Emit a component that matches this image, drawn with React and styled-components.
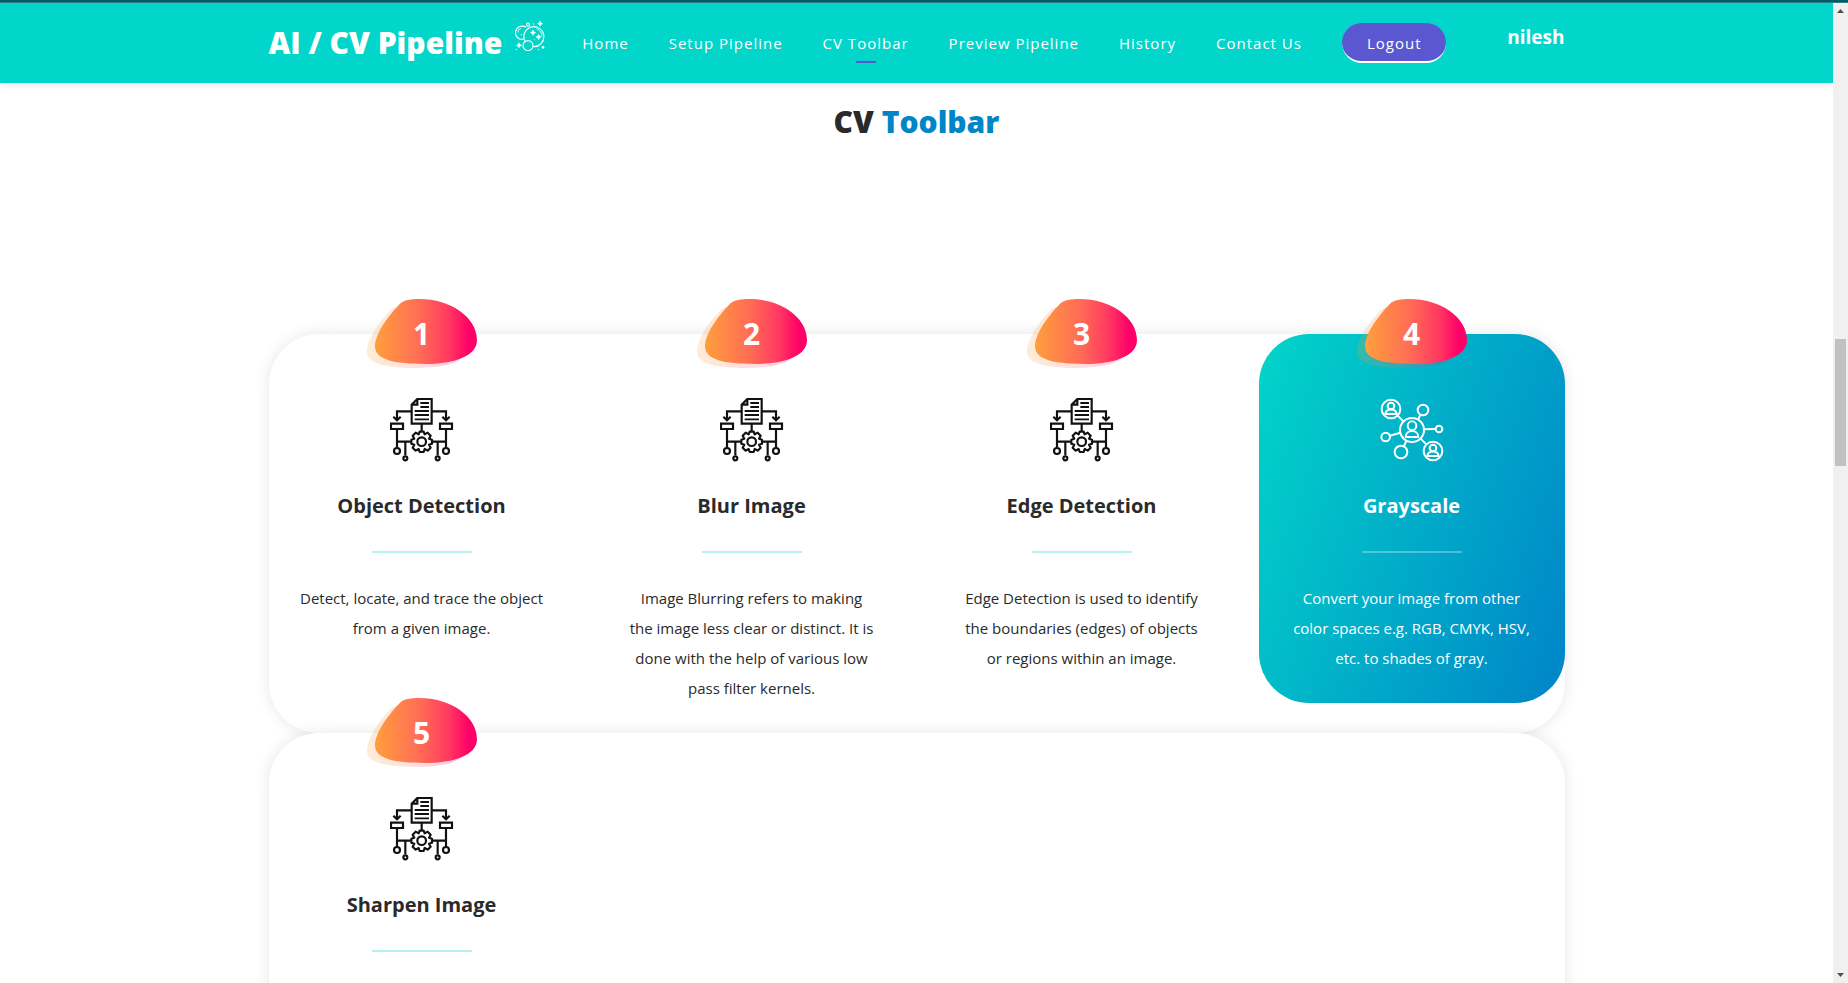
import React from "react";
import styled, { createGlobalStyle } from "styled-components";

const GlobalStyle = createGlobalStyle`
  *, *::before, *::after { box-sizing: border-box; }
  body {
    margin: 0;
    background: #fff;
    color: #2a2a2a;
    font-family: "Open Sans", "Noto Sans", sans-serif;
  }
  h1, h2, h3, p, ul { margin: 0; padding: 0; }
`;

const Shell = styled.div`
  display: flex;
  flex-direction: column;
  height: 100vh;
  overflow: hidden;
`;

const TopStrip = styled.div`
  flex: none;
  height: 3px;
  background: #005b66;
  border-bottom: 1px solid #2b7f85;
`;

const Viewport = styled.div`
  flex: 1;
  min-height: 0;
  display: flex;
`;

const Page = styled.div`
  flex: 1;
  min-width: 0;
  overflow: hidden;
`;

const Container = styled.div`
  width: 100%;
  max-width: 1320px;
  margin: 0 auto;
  padding: 0 12px;
`;

const Header = styled.header`
  position: relative;
  background: #02d5c9;
  box-shadow: 0 0 10px rgba(0, 0, 0, 0.15);
`;

const HeaderRow = styled(Container)`
  display: flex;
  align-items: center;
  height: 80px;
`;

const Brand = styled.a`
  display: flex;
  align-items: flex-start;
  gap: 13px;
  color: #fff;
  font-size: 30px;
  font-weight: 800;
  line-height: 44px;
  text-decoration: none;
  white-space: nowrap;
`;

const NavList = styled.ul`
  display: flex;
  gap: 40px;
  margin-left: 37px;
  list-style: none;
`;

const NavLink = styled.a`
  display: block;
  position: relative;
  height: 40px;
  color: #fff;
  font-size: 15px;
  letter-spacing: 1px;
  line-height: 40px;
  text-decoration: none;
  white-space: nowrap;

  &::after {
    content: "";
    display: ${(p) => (p.$active ? "block" : "none")};
    position: absolute;
    left: 50%;
    bottom: 0;
    width: 20px;
    height: 2px;
    margin-left: -10px;
    background: #5a57d0;
  }
`;

const LogoutButton = styled.button`
  display: block;
  height: 40px;
  padding: 2px 25px 0;
  border: 0;
  border-bottom: 2px solid #fff;
  border-radius: 20px;
  background: #5a57d0;
  color: #fff;
  font: inherit;
  font-size: 15px;
  letter-spacing: 1px;
  line-height: 36px;
`;

const UserName = styled.span`
  align-self: flex-start;
  margin: 20px 0 0 auto;
  color: #fff;
  font-size: 19px;
  font-weight: 700;
  line-height: 28px;
`;

const PageTitle = styled.h2`
  padding: 18px 0 192px;
  font-size: 30px;
  font-weight: 800;
  line-height: 41px;
  text-align: center;

  em {
    color: #0086c8;
    font-style: normal;
  }
`;

const Panel = styled.section`
  display: grid;
  grid-template-columns: repeat(4, minmax(0, 1fr));
  gap: 24px;
  align-items: start;
  min-height: 360px;
  border-radius: 50px;
  background: #fff;
  box-shadow: 0 0 15px rgba(0, 0, 0, 0.1);
`;

const Card = styled.article`
  position: relative;
  display: flex;
  flex-direction: column;
  align-items: center;
  padding: 64px 30px 30px;
  border-radius: 50px;
  text-align: center;
  color: ${(p) => (p.$featured ? "#fff" : "inherit")};
  background: ${(p) =>
    p.$featured ? "linear-gradient(110deg, #02d5c9 0%, #0084c8 100%)" : "none"};
`;

const Badge = styled.div`
  position: absolute;
  top: -35px;
  left: 50%;
  width: 110px;
  height: 70px;
  margin-left: -55px;
  color: #fff;
  font-size: 30px;
  font-weight: 700;
  line-height: 70px;

  svg {
    position: absolute;
    inset: 0;
  }

  span {
    position: relative;
  }
`;

const CardTitle = styled.h3`
  margin-top: 30px;
  font-size: 20px;
  font-weight: 700;
  line-height: 28px;
`;

const Divider = styled.div`
  width: 100px;
  height: 2px;
  margin: 31px 0 30px;
  background: ${(p) => (p.$featured ? "#fff" : "#02d5c9")};
  opacity: 0.3;
`;

const CardText = styled.p`
  font-size: 15px;
  line-height: 30px;
`;

const ScrollTrack = styled.div`
  flex: none;
  display: flex;
  flex-direction: column;
  align-items: center;
  width: 15px;
  padding: 6px 0;
  background: #f0f0f0;
`;

const ScrollThumb = styled.div`
  flex: none;
  width: 11px;
  height: 127px;
  margin: 326px 0 auto;
  background: #c1c1c1;
`;

const Sparkle = ({ x, y, r }) => (
  <path
    d={`M${x} ${y - r}Q${x + 1} ${y - 1} ${x + r} ${y}Q${x + 1} ${y + 1} ${x} ${y + r}Q${x - 1} ${y + 1} ${x - r} ${y}Q${x - 1} ${y - 1} ${x} ${y - r}Z`}
    fill="currentColor"
    strokeWidth="1.5"
  />
);

const BubblesIcon = () => (
  <svg width="30" height="30" viewBox="30 33 90 90" fill="none" stroke="currentColor" strokeWidth="3.5" aria-hidden="true">
    <circle cx="69" cy="44" r="4.5" />
    <path d="M63 52A20 20 0 1 0 55 88M60 94A30 30 0 1 1 84 110" />
    <circle cx="69" cy="107" r="15" />
    <path d="M38 68Q38 57 49 55M94 56Q110 62 111 79" strokeWidth="2.5" />
    <Sparkle x={105} y={41} r={8} />
    <Sparkle x={84} y={68} r={8} />
    <Sparkle x={101} y={81} r={8} />
    <Sparkle x={42} y={106} r={8} />
    <g fill="currentColor" stroke="none">
      <circle cx="49" cy="74" r="2" />
      <circle cx="114" cy="112" r="4" />
      <circle cx="34" cy="118" r="2" />
      <circle cx="101" cy="118" r="2" />
      <circle cx="86" cy="42" r="2" />
      <circle cx="88" cy="89" r="1.5" />
    </g>
  </svg>
);

const WorkflowIcon = () => (
  <svg width="64" height="64" viewBox="30 24 192 192" fill="none" stroke="#111" strokeWidth="6.5" aria-hidden="true">
    <path d="M112 27H155V101H95V44ZM112 27V44H95" />
    <path d="M121 39H147M121 51H147M104 63H147M104 75H147M104 88H147" strokeWidth="5.5" />
    <path d="M95 64H51V90M155 64H198V90M40 80L51 91L62 80M187 80L198 91L209 80" />
    <path d="M33 101H69V117H33ZM180 101H216V117H180Z" />
    <path d="M125 101V124M51 117V173M198 117V173M51 155H92M158 155H198M76 155V196M173 155V196" />
    <circle cx="51" cy="183" r="9" />
    <circle cx="198" cy="183" r="9" />
    <circle cx="76" cy="205" r="6" />
    <circle cx="173" cy="205" r="6" />
    <path
      d="M119 125H131L134 133L143 128L152 137L147 146L156 149V161L147 164L152 173L143 182L134 177L131 186H119L116 177L107 182L98 173L103 164L94 161V149L103 146L98 137L107 128L116 133Z"
      strokeLinejoin="round"
    />
    <circle cx="125" cy="155" r="13" />
  </svg>
);

const NetworkIcon = () => (
  <svg width="64" height="64" viewBox="30 24 192 192" fill="none" stroke="#fff" strokeWidth="6" aria-hidden="true">
    <circle cx="126" cy="120" r="36" />
    <circle cx="63" cy="57" r="28" />
    <circle cx="189" cy="183" r="28" />
    <circle cx="159" cy="60" r="16" />
    <circle cx="93" cy="186" r="19" />
    <circle cx="47" cy="141" r="13" />
    <circle cx="207" cy="117" r="10" />
    <path d="M83 77L100 94M152 146L169 163M151 75L144 89M109 153L102 168M162 118L197 117M91 128L60 137" />
    <circle cx="126" cy="107" r="13" />
    <path d="M107 141C107 117 145 117 145 141Z" strokeLinejoin="round" />
    <circle cx="63" cy="48" r="10" />
    <path d="M46 72C47 54 79 54 80 72Z" strokeLinejoin="round" />
    <circle cx="189" cy="174" r="10" />
    <path d="M172 198C173 180 205 180 206 198Z" strokeLinejoin="round" />
  </svg>
);

const BadgeShape = ({ id }) => (
  <svg width="110" height="70" viewBox="51 42 330 210" aria-hidden="true">
    <defs>
      <linearGradient id={id}>
        <stop offset="0" stopColor="#ff9f3c" />
        <stop offset="0.45" stopColor="#ff6b56" />
        <stop offset="0.73" stopColor="#ff3762" />
        <stop offset="0.92" stopColor="#ff0068" />
      </linearGradient>
    </defs>
    <path
      d="M51 200C51 160 90 108 125 72C140 62 165 62 190 62L335 220C312 240 262 249 195 249C110 247 51 238 51 200Z"
      fill={`url(#${id})`}
      opacity="0.2"
    />
    <path
      d="M75 184C75 148 110 98 150 56C160 45 185 42 208 42C302 42 381 97 381 165C381 214 312 237 224 237C134 237 75 225 75 184Z"
      fill={`url(#${id})`}
    />
  </svg>
);

const navItems = ["Home", "Setup Pipeline", "CV Toolbar", "Preview Pipeline", "History", "Contact Us"];

const rows = [
  [
    { n: 1, title: "Object Detection", text: "Detect, locate, and trace the object from a given image." },
    {
      n: 2,
      title: "Blur Image",
      text: "Image Blurring refers to making the image less clear or distinct. It is done with the help of various low pass filter kernels.",
    },
    {
      n: 3,
      title: "Edge Detection",
      text: "Edge Detection is used to identify the boundaries (edges) of objects or regions within an image.",
    },
    {
      n: 4,
      title: "Grayscale",
      text: "Convert your image from other color spaces e.g. RGB, CMYK, HSV, etc. to shades of gray.",
      featured: true,
    },
  ],
  [{ n: 5, title: "Sharpen Image" }],
];

const ToolCard = ({ n, title, text, featured }) => (
  <Card $featured={featured}>
    <Badge>
      <BadgeShape id={`badge-${n}`} />
      <span>{n}</span>
    </Badge>
    {featured ? <NetworkIcon /> : <WorkflowIcon />}
    <CardTitle>{title}</CardTitle>
    <Divider $featured={featured} />
    {text && <CardText>{text}</CardText>}
  </Card>
);

export default function App() {
  return (
    <Shell>
      <GlobalStyle />
      <TopStrip />
      <Viewport>
        <Page>
          <Header>
            <HeaderRow>
              <Brand href="#home">
                AI / CV Pipeline
                <BubblesIcon />
              </Brand>
              <nav>
                <NavList>
                  {navItems.map((item) => (
                    <li key={item}>
                      <NavLink href="#" $active={item === "CV Toolbar"}>
                        {item}
                      </NavLink>
                    </li>
                  ))}
                  <li>
                    <LogoutButton type="button">Logout</LogoutButton>
                  </li>
                </NavList>
              </nav>
              <UserName>nilesh</UserName>
            </HeaderRow>
          </Header>
          <Container as="main">
            <PageTitle>
              CV <em>Toolbar</em>
            </PageTitle>
            {rows.map((cards, i) => (
              <Panel key={i}>
                {cards.map((card) => (
                  <ToolCard key={card.n} {...card} />
                ))}
              </Panel>
            ))}
          </Container>
        </Page>
        <ScrollTrack aria-hidden="true">
          <svg width="7" height="4" viewBox="0 0 7 4">
            <path d="M0 4L3.5 0L7 4Z" fill="#505050" />
          </svg>
          <ScrollThumb />
          <svg width="7" height="4" viewBox="0 0 7 4">
            <path d="M0 0L3.5 4L7 0Z" fill="#505050" />
          </svg>
        </ScrollTrack>
      </Viewport>
    </Shell>
  );
}
